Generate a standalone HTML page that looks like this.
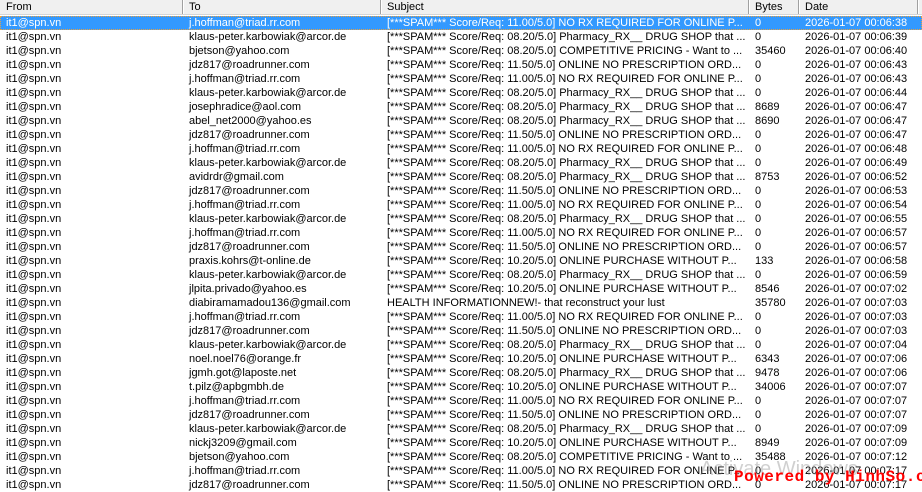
<!DOCTYPE html>
<html><head><meta charset="utf-8">
<style>
*{margin:0;padding:0;box-sizing:border-box}
body{width:922px;height:484px;overflow:hidden;background:#fff;font-family:"Liberation Sans",Tahoma,sans-serif;font-size:11px;color:#000;position:relative}
.hdr{position:absolute;left:0;top:0;width:922px;height:15px;background:#f0f0f0;border-bottom:1px solid #d5d5d5}
.hdr span{position:absolute;top:0;height:14px;line-height:14px;border-right:1px solid #a0a0a0;box-shadow:1px 0 0 #fff}
.r{position:absolute;left:0;width:922px;height:14px;line-height:14px;white-space:nowrap}
.r span,.hdr span{position:absolute;overflow:hidden;white-space:nowrap;padding-left:6px}
.a{left:0;width:183px}.b{left:183px;width:198px}.c{left:381px;width:368px}.d{left:749px;width:50px}.e{left:799px;width:119px}.f{left:918px;width:10px}
.sel{background:#3399ff;color:#fff;outline:1px dotted #e8a040;outline-offset:-1px}
.wm{position:absolute;left:734px;top:468px;color:#f00;font-family:"Liberation Mono",monospace;font-weight:bold;font-size:16px;letter-spacing:0.5px;white-space:nowrap}
.aw{position:absolute;left:700px;top:458px;color:rgba(120,120,120,0.35);font-size:20px;white-space:nowrap}
</style></head><body>
<div class="hdr"><span class="a">From</span><span class="b">To</span><span class="c">Subject</span><span class="d">Bytes</span><span class="e">Date</span><span class="f">S</span></div>

<div class="r sel" style="top:16px"><span class="a">it1@spn.vn</span><span class="b">j.hoffman@triad.rr.com</span><span class="c">[***SPAM*** Score/Req: 11.00/5.0] NO RX REQUIRED FOR ONLINE P...</span><span class="d">0</span><span class="e">2026-01-07 00:06:38</span><span class="f">N</span></div>
<div class="r" style="top:30px"><span class="a">it1@spn.vn</span><span class="b">klaus-peter.karbowiak@arcor.de</span><span class="c">[***SPAM*** Score/Req: 08.20/5.0] Pharmacy_RX__ DRUG SHOP that ...</span><span class="d">0</span><span class="e">2026-01-07 00:06:39</span><span class="f">N</span></div>
<div class="r" style="top:44px"><span class="a">it1@spn.vn</span><span class="b">bjetson@yahoo.com</span><span class="c">[***SPAM*** Score/Req: 08.20/5.0] COMPETITIVE PRICING - Want to ...</span><span class="d">35460</span><span class="e">2026-01-07 00:06:40</span><span class="f">N</span></div>
<div class="r" style="top:58px"><span class="a">it1@spn.vn</span><span class="b">jdz817@roadrunner.com</span><span class="c">[***SPAM*** Score/Req: 11.50/5.0] ONLINE NO PRESCRIPTION ORD...</span><span class="d">0</span><span class="e">2026-01-07 00:06:43</span><span class="f">N</span></div>
<div class="r" style="top:72px"><span class="a">it1@spn.vn</span><span class="b">j.hoffman@triad.rr.com</span><span class="c">[***SPAM*** Score/Req: 11.00/5.0] NO RX REQUIRED FOR ONLINE P...</span><span class="d">0</span><span class="e">2026-01-07 00:06:43</span><span class="f">N</span></div>
<div class="r" style="top:86px"><span class="a">it1@spn.vn</span><span class="b">klaus-peter.karbowiak@arcor.de</span><span class="c">[***SPAM*** Score/Req: 08.20/5.0] Pharmacy_RX__ DRUG SHOP that ...</span><span class="d">0</span><span class="e">2026-01-07 00:06:44</span><span class="f">N</span></div>
<div class="r" style="top:100px"><span class="a">it1@spn.vn</span><span class="b">josephradice@aol.com</span><span class="c">[***SPAM*** Score/Req: 08.20/5.0] Pharmacy_RX__ DRUG SHOP that ...</span><span class="d">8689</span><span class="e">2026-01-07 00:06:47</span><span class="f">Y</span></div>
<div class="r" style="top:114px"><span class="a">it1@spn.vn</span><span class="b">abel_net2000@yahoo.es</span><span class="c">[***SPAM*** Score/Req: 08.20/5.0] Pharmacy_RX__ DRUG SHOP that ...</span><span class="d">8690</span><span class="e">2026-01-07 00:06:47</span><span class="f">Y</span></div>
<div class="r" style="top:128px"><span class="a">it1@spn.vn</span><span class="b">jdz817@roadrunner.com</span><span class="c">[***SPAM*** Score/Req: 11.50/5.0] ONLINE NO PRESCRIPTION ORD...</span><span class="d">0</span><span class="e">2026-01-07 00:06:47</span><span class="f">N</span></div>
<div class="r" style="top:142px"><span class="a">it1@spn.vn</span><span class="b">j.hoffman@triad.rr.com</span><span class="c">[***SPAM*** Score/Req: 11.00/5.0] NO RX REQUIRED FOR ONLINE P...</span><span class="d">0</span><span class="e">2026-01-07 00:06:48</span><span class="f">N</span></div>
<div class="r" style="top:156px"><span class="a">it1@spn.vn</span><span class="b">klaus-peter.karbowiak@arcor.de</span><span class="c">[***SPAM*** Score/Req: 08.20/5.0] Pharmacy_RX__ DRUG SHOP that ...</span><span class="d">0</span><span class="e">2026-01-07 00:06:49</span><span class="f">N</span></div>
<div class="r" style="top:170px"><span class="a">it1@spn.vn</span><span class="b">avidrdr@gmail.com</span><span class="c">[***SPAM*** Score/Req: 08.20/5.0] Pharmacy_RX__ DRUG SHOP that ...</span><span class="d">8753</span><span class="e">2026-01-07 00:06:52</span><span class="f">Y</span></div>
<div class="r" style="top:184px"><span class="a">it1@spn.vn</span><span class="b">jdz817@roadrunner.com</span><span class="c">[***SPAM*** Score/Req: 11.50/5.0] ONLINE NO PRESCRIPTION ORD...</span><span class="d">0</span><span class="e">2026-01-07 00:06:53</span><span class="f">N</span></div>
<div class="r" style="top:198px"><span class="a">it1@spn.vn</span><span class="b">j.hoffman@triad.rr.com</span><span class="c">[***SPAM*** Score/Req: 11.00/5.0] NO RX REQUIRED FOR ONLINE P...</span><span class="d">0</span><span class="e">2026-01-07 00:06:54</span><span class="f">N</span></div>
<div class="r" style="top:212px"><span class="a">it1@spn.vn</span><span class="b">klaus-peter.karbowiak@arcor.de</span><span class="c">[***SPAM*** Score/Req: 08.20/5.0] Pharmacy_RX__ DRUG SHOP that ...</span><span class="d">0</span><span class="e">2026-01-07 00:06:55</span><span class="f">N</span></div>
<div class="r" style="top:226px"><span class="a">it1@spn.vn</span><span class="b">j.hoffman@triad.rr.com</span><span class="c">[***SPAM*** Score/Req: 11.00/5.0] NO RX REQUIRED FOR ONLINE P...</span><span class="d">0</span><span class="e">2026-01-07 00:06:57</span><span class="f">N</span></div>
<div class="r" style="top:240px"><span class="a">it1@spn.vn</span><span class="b">jdz817@roadrunner.com</span><span class="c">[***SPAM*** Score/Req: 11.50/5.0] ONLINE NO PRESCRIPTION ORD...</span><span class="d">0</span><span class="e">2026-01-07 00:06:57</span><span class="f">N</span></div>
<div class="r" style="top:254px"><span class="a">it1@spn.vn</span><span class="b">praxis.kohrs@t-online.de</span><span class="c">[***SPAM*** Score/Req: 10.20/5.0] ONLINE PURCHASE WITHOUT P...</span><span class="d">133</span><span class="e">2026-01-07 00:06:58</span><span class="f">N</span></div>
<div class="r" style="top:268px"><span class="a">it1@spn.vn</span><span class="b">klaus-peter.karbowiak@arcor.de</span><span class="c">[***SPAM*** Score/Req: 08.20/5.0] Pharmacy_RX__ DRUG SHOP that ...</span><span class="d">0</span><span class="e">2026-01-07 00:06:59</span><span class="f">N</span></div>
<div class="r" style="top:282px"><span class="a">it1@spn.vn</span><span class="b">jlpita.privado@yahoo.es</span><span class="c">[***SPAM*** Score/Req: 10.20/5.0] ONLINE PURCHASE WITHOUT P...</span><span class="d">8546</span><span class="e">2026-01-07 00:07:02</span><span class="f">Y</span></div>
<div class="r" style="top:296px"><span class="a">it1@spn.vn</span><span class="b">diabiramamadou136@gmail.com</span><span class="c">HEALTH INFORMATIONNEW!- that reconstruct your lust</span><span class="d">35780</span><span class="e">2026-01-07 00:07:03</span><span class="f">N</span></div>
<div class="r" style="top:310px"><span class="a">it1@spn.vn</span><span class="b">j.hoffman@triad.rr.com</span><span class="c">[***SPAM*** Score/Req: 11.00/5.0] NO RX REQUIRED FOR ONLINE P...</span><span class="d">0</span><span class="e">2026-01-07 00:07:03</span><span class="f">N</span></div>
<div class="r" style="top:324px"><span class="a">it1@spn.vn</span><span class="b">jdz817@roadrunner.com</span><span class="c">[***SPAM*** Score/Req: 11.50/5.0] ONLINE NO PRESCRIPTION ORD...</span><span class="d">0</span><span class="e">2026-01-07 00:07:03</span><span class="f">N</span></div>
<div class="r" style="top:338px"><span class="a">it1@spn.vn</span><span class="b">klaus-peter.karbowiak@arcor.de</span><span class="c">[***SPAM*** Score/Req: 08.20/5.0] Pharmacy_RX__ DRUG SHOP that ...</span><span class="d">0</span><span class="e">2026-01-07 00:07:04</span><span class="f">N</span></div>
<div class="r" style="top:352px"><span class="a">it1@spn.vn</span><span class="b">noel.noel76@orange.fr</span><span class="c">[***SPAM*** Score/Req: 10.20/5.0] ONLINE PURCHASE WITHOUT P...</span><span class="d">6343</span><span class="e">2026-01-07 00:07:06</span><span class="f">N</span></div>
<div class="r" style="top:366px"><span class="a">it1@spn.vn</span><span class="b">jgmh.got@laposte.net</span><span class="c">[***SPAM*** Score/Req: 08.20/5.0] Pharmacy_RX__ DRUG SHOP that ...</span><span class="d">9478</span><span class="e">2026-01-07 00:07:06</span><span class="f">N</span></div>
<div class="r" style="top:380px"><span class="a">it1@spn.vn</span><span class="b">t.pilz@apbgmbh.de</span><span class="c">[***SPAM*** Score/Req: 10.20/5.0] ONLINE PURCHASE WITHOUT P...</span><span class="d">34006</span><span class="e">2026-01-07 00:07:07</span><span class="f">N</span></div>
<div class="r" style="top:394px"><span class="a">it1@spn.vn</span><span class="b">j.hoffman@triad.rr.com</span><span class="c">[***SPAM*** Score/Req: 11.00/5.0] NO RX REQUIRED FOR ONLINE P...</span><span class="d">0</span><span class="e">2026-01-07 00:07:07</span><span class="f">N</span></div>
<div class="r" style="top:408px"><span class="a">it1@spn.vn</span><span class="b">jdz817@roadrunner.com</span><span class="c">[***SPAM*** Score/Req: 11.50/5.0] ONLINE NO PRESCRIPTION ORD...</span><span class="d">0</span><span class="e">2026-01-07 00:07:07</span><span class="f">N</span></div>
<div class="r" style="top:422px"><span class="a">it1@spn.vn</span><span class="b">klaus-peter.karbowiak@arcor.de</span><span class="c">[***SPAM*** Score/Req: 08.20/5.0] Pharmacy_RX__ DRUG SHOP that ...</span><span class="d">0</span><span class="e">2026-01-07 00:07:09</span><span class="f">N</span></div>
<div class="r" style="top:436px"><span class="a">it1@spn.vn</span><span class="b">nickj3209@gmail.com</span><span class="c">[***SPAM*** Score/Req: 10.20/5.0] ONLINE PURCHASE WITHOUT P...</span><span class="d">8949</span><span class="e">2026-01-07 00:07:09</span><span class="f">Y</span></div>
<div class="r" style="top:450px"><span class="a">it1@spn.vn</span><span class="b">bjetson@yahoo.com</span><span class="c">[***SPAM*** Score/Req: 08.20/5.0] COMPETITIVE PRICING - Want to ...</span><span class="d">35488</span><span class="e">2026-01-07 00:07:12</span><span class="f">N</span></div>
<div class="r" style="top:464px"><span class="a">it1@spn.vn</span><span class="b">j.hoffman@triad.rr.com</span><span class="c">[***SPAM*** Score/Req: 11.00/5.0] NO RX REQUIRED FOR ONLINE P...</span><span class="d">0</span><span class="e">2026-01-07 00:07:17</span><span class="f">N</span></div>
<div class="r" style="top:478px"><span class="a">it1@spn.vn</span><span class="b">jdz817@roadrunner.com</span><span class="c">[***SPAM*** Score/Req: 11.50/5.0] ONLINE NO PRESCRIPTION ORD...</span><span class="d">0</span><span class="e">2026-01-07 00:07:17</span><span class="f">N</span></div>

<div class="aw">Activate Windows</div>
<div class="wm">Powered by HinhSo.com</div>
</body></html>
